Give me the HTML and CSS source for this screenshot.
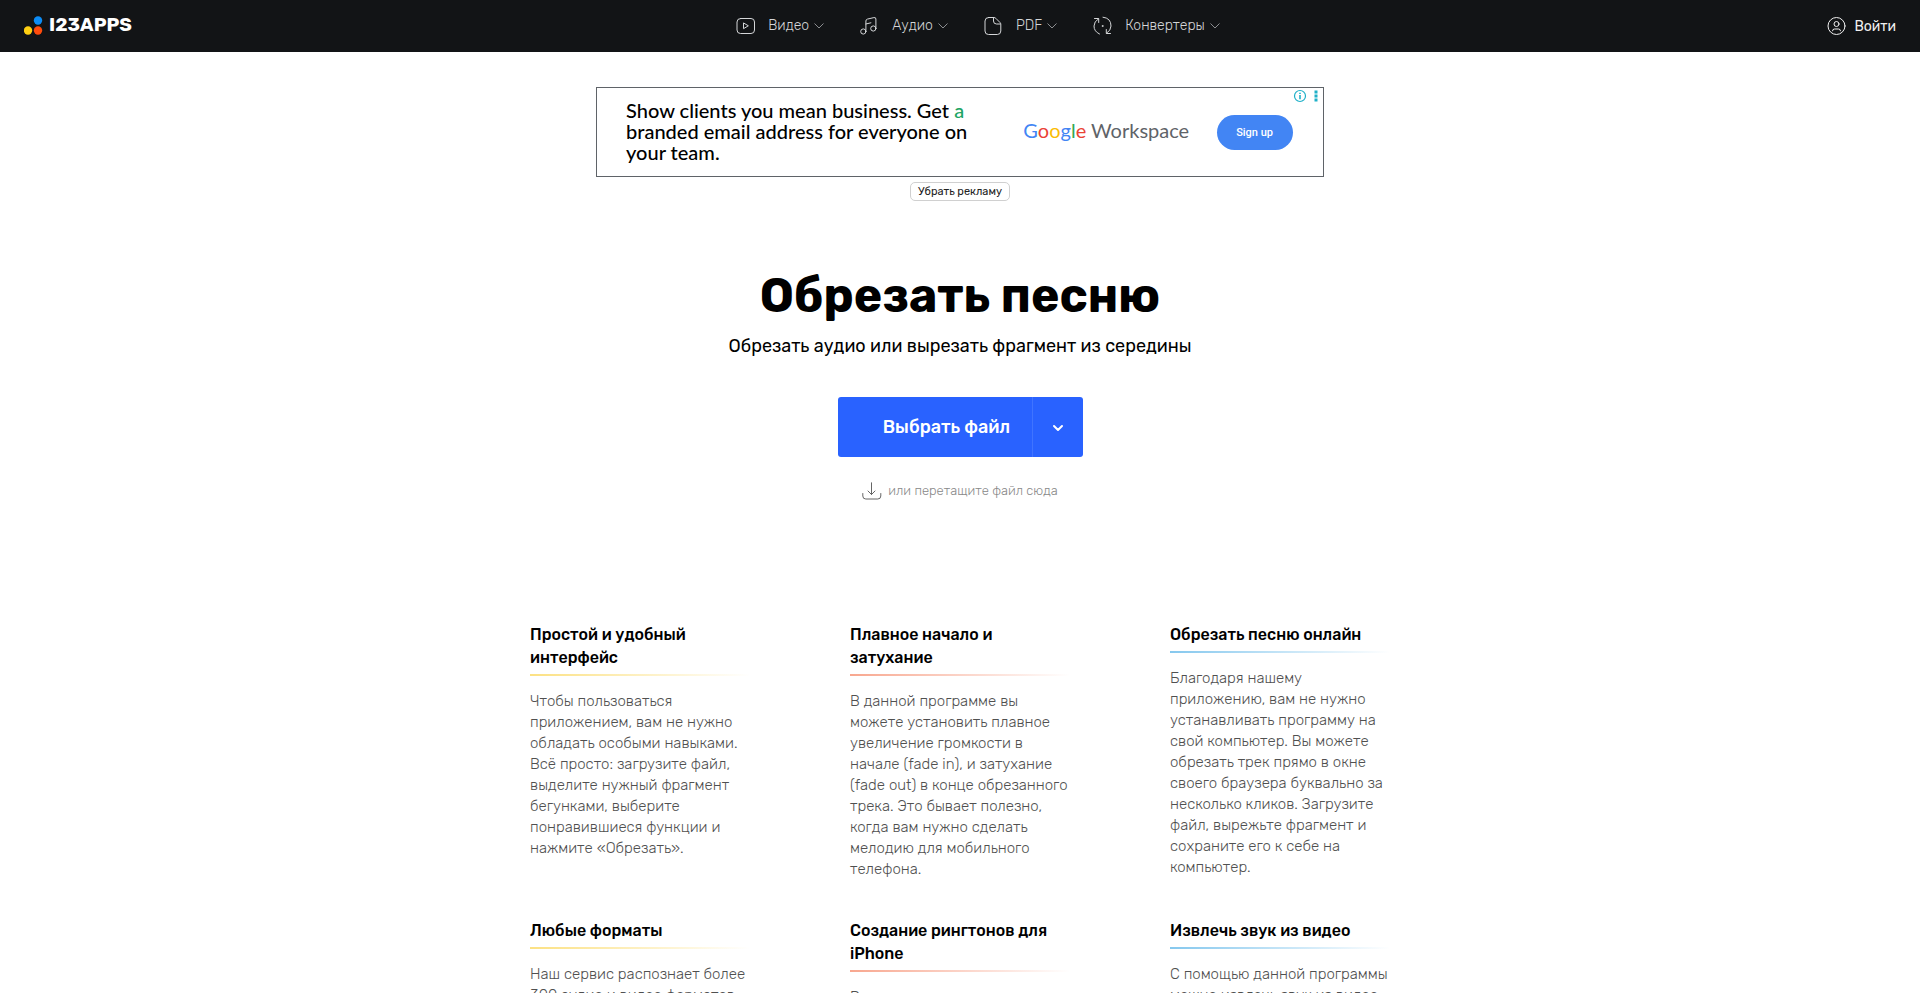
FILE: index.html
```html
<!DOCTYPE html>
<html lang="ru">
<head>
<meta charset="utf-8">
<title>Обрезать песню</title>
<link rel="stylesheet" href="styles.css">
</head>
<body>
<header class="header">
  <a class="logo" href="#" aria-label="123APPS">
    <svg class="logo-dots" width="19" height="19" viewBox="0 0 19 19" aria-hidden="true">
      <circle cx="14" cy="4.500" r="4.200" fill="#0c8cf5"/><circle cx="4" cy="14.500" r="4.200" fill="#ffd012"/><circle cx="14" cy="14.500" r="4.200" fill="#ff4b0c"/>
    </svg>
    <span class="logo-name">I23APPS</span>
  </a>
  <nav class="nav">
    <a class="nav-item" href="#">
      <svg class="icon" viewBox="0 0 20 20"><rect x="1" y="2.500" width="17.500" height="15" rx="3.500"/><path d="M7.500 7.300v5.400l4.500-2.700z"/></svg>
      <span>Видео</span>
      <svg class="caret" viewBox="0 0 10 6"><path d="M.5.5 5 5 9.500.5"/></svg>
    </a>
    <a class="nav-item" href="#">
      <svg class="icon" viewBox="0 0 20 20"><circle cx="3.300" cy="15.500" r="2.600"/><circle cx="13.300" cy="12.500" r="2.600"/><path d="M5.900 15.500V5Q5.900 3.500 7.400 3.100l6.500-1.500Q15.900 1.200 15.900 3v9.500M5.900 8l5-1.200"/></svg>
      <span>Аудио</span>
      <svg class="caret" viewBox="0 0 10 6"><path d="M.5.5 5 5 9.500.5"/></svg>
    </a>
    <a class="nav-item" href="#">
      <svg class="icon" viewBox="0 0 20 20"><path d="M4.500 1.500h5.500q1 0 1.800.8l4.200 4.200q.8.800.8 1.800V15q0 3.500-3.500 3.500H4.500Q1 18.500 1 15V5Q1 1.500 4.500 1.500zM9.500 1.700V5q0 3 3 3h4"/></svg>
      <span>PDF</span>
      <svg class="caret" viewBox="0 0 10 6"><path d="M.5.5 5 5 9.500.5"/></svg>
    </a>
    <a class="nav-item" href="#">
      <svg class="icon" viewBox="0 0 20 20"><path d="M1.500 2.500h4.200v4M5.500 2.800Q1 5.500 1 10q0 5.500 5.500 8M10 1.200Q18 2 18 10q0 4.500-4.500 7.300M13.300 13.500v4h4.200"/><circle cx="9.500" cy="10" r=".5"/></svg>
      <span>Конвертеры</span>
      <svg class="caret" viewBox="0 0 10 6"><path d="M.5.5 5 5 9.500.5"/></svg>
    </a>
  </nav>
  <a class="login" href="#">
    <svg class="icon" viewBox="0 0 20 20"><circle cx="10.500" cy="10" r="8.500"/><circle cx="10.500" cy="8" r="2.500"/><path d="M6.500 14.800q0-1.800 2-1.800h4q2 0 2 1.800"/></svg>
    <span>Войти</span>
  </a>
</header>
<main>
  <aside class="promo">
    <div class="ad">
      <p class="ad-text">Show clients you mean business. Get <span class="green">a</span><br>branded email address for everyone on<br>your team.</p>
      <p class="ad-brand"><span class="g-blue">G</span><span class="g-red">o</span><span class="g-yellow">o</span><span class="g-blue">g</span><span class="g-green">l</span><span class="g-red">e</span> Workspace</p>
      <a class="ad-button" href="#">Sign up</a>
      <svg class="ad-marks" width="26" height="14" viewBox="0 0 26 14" aria-hidden="true"><circle cx="7" cy="7" r="5.500" fill="none" stroke="#1eb0c8" stroke-width="1.200"/><path d="M7 6v4.200M7 3.700v1.300" stroke="#1eb0c8" stroke-width="1.600"/><path d="M21.500 1.500h3v3h-3zM21.500 5.500h3v3h-3zM21.500 9.500h3v3h-3z" fill="#1eb0c8"/></svg>
    </div>
    <button class="hide-ad" type="button">Убрать рекламу</button>
  </aside>
  <section class="hero">
    <h1>Обрезать песню</h1>
    <p class="subtitle">Обрезать аудио или вырезать фрагмент из середины</p>
    <div class="picker">
      <button class="pick" type="button">Выбрать файл</button>
      <button class="pick-more" type="button" aria-label="Другие источники"><svg width="12" height="8" viewBox="0 0 12 8"><path d="m2 2 4 4 4-4" fill="none" stroke="#fff" stroke-width="2" stroke-linecap="round" stroke-linejoin="round"/></svg></button>
    </div>
    <p class="drop"><svg width="20" height="18" viewBox="0 0 20 18" fill="none" stroke="#666" stroke-linecap="round" stroke-linejoin="round"><path d="M.8 11.500V14q0 3 3 3h12q3 0 3-3v-2.500M9.500.8v11.700M6 9l3.500 3.500L13 9"/></svg><span>или перетащите файл сюда</span></p>
  </section>
  <section class="features">
    <article class="feature yellow"><h2>Простой и удобный<br>интерфейс</h2><p>Чтобы пользоваться<br>приложением, вам не нужно<br>обладать особыми навыками.<br>Всё просто: загрузите файл,<br>выделите нужный фрагмент<br>бегунками, выберите<br>понравившиеся функции и<br>нажмите «Обрезать».</p></article>
    <article class="feature red"><h2>Плавное начало и<br>затухание</h2><p>В данной программе вы<br>можете установить плавное<br>увеличение громкости в<br>начале (fade in), и затухание<br>(fade out) в конце обрезанного<br>трека. Это бывает полезно,<br>когда вам нужно сделать<br>мелодию для мобильного<br>телефона.</p></article>
    <article class="feature blue"><h2>Обрезать песню онлайн</h2><p>Благодаря нашему<br>приложению, вам не нужно<br>устанавливать программу на<br>свой компьютер. Вы можете<br>обрезать трек прямо в окне<br>своего браузера буквально за<br>несколько кликов. Загрузите<br>файл, вырежьте фрагмент и<br>сохраните его к себе на<br>компьютер.</p></article>
    <article class="feature yellow"><h2>Любые форматы</h2><p>Наш сервис распознает более<br>300 аудио и видео форматов.</p></article>
    <article class="feature red"><h2>Создание рингтонов для<br>iPhone</h2><p>В нашем приложении</p></article>
    <article class="feature blue"><h2>Извлечь звук из видео</h2><p>С помощью данной программы<br>можно извлечь звук из видео.</p></article>
  </section>
</main>
</body>
</html>
```
FILE: styles.css
```css
* { box-sizing: border-box; }
html { height: 100%; }
body {
  margin: 0;
  height: 100%;
  overflow: hidden;
  background: #fff;
  color: #000;
  font-family: Rubik, Roboto, "Liberation Sans", sans-serif;
}
h1, h2, p { margin: 0; }
a { color: inherit; text-decoration: none; }
button { border: 0; font-family: inherit; cursor: pointer; }

.header {
  display: grid;
  grid-template-columns: 1fr auto 1fr;
  align-items: center;
  height: 52px;
  padding: 0 24px;
  background: #121416;
  color: #d4d6d8;
}
.logo { display: flex; align-items: center; gap: 6px; padding-bottom: 2px; }
.logo-name { color: #fff; font-size: 19px; font-weight: 700; line-height: 24px; }
.nav { display: flex; }
.nav-item { display: flex; align-items: center; margin-left: 36px; font-size: 14px; font-weight: 300; line-height: 20px; }
.icon { width: 20px; height: 20px; fill: none; stroke: currentColor; stroke-linecap: round; stroke-linejoin: round; }
.nav-item .icon { margin-right: 12px; }
.caret { width: 10px; height: 6px; margin-left: 5px; fill: none; stroke: #8b8d90; }
.login { display: flex; align-items: center; justify-self: end; gap: 8px; font-size: 14px; color: #f0f0f0; }

.promo { display: flex; flex-direction: column; align-items: center; padding-top: 35px; }
.ad {
  position: relative;
  display: flex;
  align-items: center;
  width: 728px;
  max-width: 100%;
  height: 90px;
  padding: 0 30px 0 29px;
  border: 1px solid #5f6368;
}
.ad-text { flex: 1; padding-bottom: 2px; font: 500 20px/21px Lato, sans-serif; }
.green { color: #20a464; }
.ad-brand { margin-right: 28px; padding-bottom: 4px; color: #5f6368; font: 400 20px/24px Lato, sans-serif; }
.g-blue { color: #4285f4; }
.g-red { color: #ea4335; }
.g-yellow { color: #fbbc04; }
.g-green { color: #34a853; }
.ad-button { padding: 0 20px 0 19px; border-radius: 18px; background: #4285f4; color: #fff; font: 500 11px/35px Roboto, sans-serif; }
.ad-marks { position: absolute; top: 1px; right: 4px; }
.hide-ad {
  height: 19px;
  margin-top: 5px;
  padding: 0 7px;
  border: 1px solid #d0d0d0;
  border-radius: 5px;
  background: #fff;
  color: #222;
  font-size: 11px;
  line-height: 17px;
}

.hero { display: flex; flex-direction: column; align-items: center; padding-top: 65px; }
h1 { font-size: 48px; font-weight: 700; line-height: 60px; }
.subtitle { margin-top: 7px; font-size: 18px; line-height: 26px; }
.picker { display: flex; margin-top: 38px; border-radius: 3px; background: #2962ff; overflow: hidden; }
.pick { width: 194px; height: 60px; padding: 0 0 0 24px; background: none; color: #fff; font-size: 18px; font-weight: 500; }
.pick-more { width: 51px; border-left: 1px solid #4074ff; background: none; }
.drop { display: flex; align-items: center; gap: 6px; margin-top: 24px; color: #888; font-size: 13px; font-weight: 300; line-height: 20px; }

.features {
  display: grid;
  grid-template-columns: repeat(3, 220px);
  justify-content: center;
  gap: 39px 100px;
  margin-top: 122px;
}
.feature h2 { padding-bottom: 15px; font-size: 16px; font-weight: 500; line-height: 23px; }
.feature h2::after { content: ""; display: block; height: 2px; margin-top: 5px; background: linear-gradient(90deg, var(--line), #fff); }
.feature p { color: #505050; font-size: 15px; font-weight: 300; line-height: 21px; }
.yellow { --line: #fce183; }
.red { --line: #f8a78f; }
.blue { --line: #86c8ee; }
```
